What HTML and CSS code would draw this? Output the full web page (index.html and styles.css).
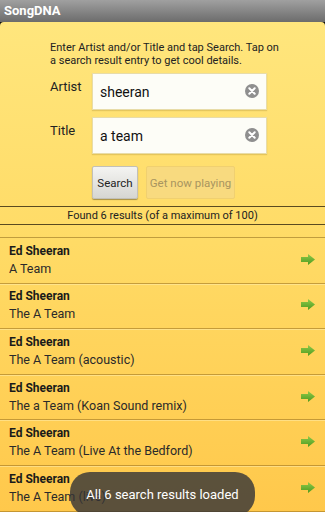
FILE: index.html
```html
<!DOCTYPE html>
<html>
<head>
<meta charset="utf-8">
<link rel="stylesheet" href="styles.css">
</head>
<body>
<div class="app">
  <div class="titlebar">SongDNA</div>
  <div class="panel">
    <div class="form">
      <p class="intro">Enter Artist and/or Title and tap Search. Tap on a search result entry to get cool details.</p>
      <div class="field">
        <span class="label">Artist</span>
        <div class="input"><span class="value">sheeran</span><span class="clear"><svg viewBox="0 0 14 14" width="14" height="14"><circle cx="7" cy="7" r="7" fill="#8f8f8f"/><path d="M4.3 4.3 9.7 9.7M9.7 4.3 4.3 9.7" stroke="#fff" stroke-width="2" stroke-linecap="round"/></svg></span></div>
      </div>
      <div class="field">
        <span class="label">Title</span>
        <div class="input"><span class="value">a team</span><span class="clear"><svg viewBox="0 0 14 14" width="14" height="14"><circle cx="7" cy="7" r="7" fill="#8f8f8f"/><path d="M4.3 4.3 9.7 9.7M9.7 4.3 4.3 9.7" stroke="#fff" stroke-width="2" stroke-linecap="round"/></svg></span></div>
      </div>
      <div class="buttons">
        <button class="btn btn-search">Search</button>
        <button class="btn btn-disabled">Get now playing</button>
      </div>
    </div>
    <div class="status">Found 6 results (of a maximum of 100)</div>
    <ul class="results">
      <li class="row"><div class="txt"><b>Ed Sheeran</b><span>A Team</span></div><svg class="arrow" viewBox="0 0 14 11" width="14" height="11"><defs><linearGradient id="g" x1="0" y1="0" x2="0" y2="1"><stop offset="0" stop-color="#8fcb4a"/><stop offset="1" stop-color="#4e9a1e"/></linearGradient></defs><path d="M0 3H7V0L14 5.5 7 11V8H0Z" fill="url(#g)"/></svg></li>
      <li class="row"><div class="txt"><b>Ed Sheeran</b><span>The A Team</span></div><svg class="arrow" viewBox="0 0 14 11" width="14" height="11"><path d="M0 3H7V0L14 5.5 7 11V8H0Z" fill="url(#g)"/></svg></li>
      <li class="row"><div class="txt"><b>Ed Sheeran</b><span>The A Team (acoustic)</span></div><svg class="arrow" viewBox="0 0 14 11" width="14" height="11"><path d="M0 3H7V0L14 5.5 7 11V8H0Z" fill="url(#g)"/></svg></li>
      <li class="row"><div class="txt"><b>Ed Sheeran</b><span>The a Team (Koan Sound remix)</span></div><svg class="arrow" viewBox="0 0 14 11" width="14" height="11"><path d="M0 3H7V0L14 5.5 7 11V8H0Z" fill="url(#g)"/></svg></li>
      <li class="row"><div class="txt"><b>Ed Sheeran</b><span>The A Team (Live At the Bedford)</span></div><svg class="arrow" viewBox="0 0 14 11" width="14" height="11"><path d="M0 3H7V0L14 5.5 7 11V8H0Z" fill="url(#g)"/></svg></li>
      <li class="row"><div class="txt"><b>Ed Sheeran</b><span>The A Team (live)</span></div><svg class="arrow" viewBox="0 0 14 11" width="14" height="11"><path d="M0 3H7V0L14 5.5 7 11V8H0Z" fill="url(#g)"/></svg></li>
    </ul>
    <div class="toast">All 6 search results loaded</div>
  </div>
</div>
</body>
</html>
```
FILE: styles.css
```css
* { box-sizing: border-box; }
html, body { margin: 0; padding: 0; }
body {
  width: 325px; height: 512px; overflow: hidden;
  background: #111;
  font-family: Roboto, "Noto Sans", sans-serif;
}
.app { width: 325px; height: 512px; display: flex; flex-direction: column; }
.titlebar {
  height: 22px; flex: none;
  background: linear-gradient(#a0a0a0, #6c6c6c);
  color: #fff; font-weight: bold; font-size: 13px;
  line-height: 22px; padding-left: 4px;
}
.panel {
  position: relative;
  flex: 1;
  border-radius: 4px 4px 0 0;
  background: linear-gradient(#ffe67d 0%, #ffdb66 45%, #ffc84b 100%);
  overflow: hidden;
}
.form { padding: 19px 0 0 50px; }
.intro {
  margin: 0; width: 230px;
  font-size: 11px; line-height: 13px; color: #222;
}
.field { display: flex; margin-top: 6px; }
.field + .field { margin-top: 7px; }
.field .label {
  width: 42px; font-size: 13px; color: #222; padding-top: 6px;
}
.input {
  width: 175px; height: 37px;
  background: #fdfdf7;
  border: 1px solid #e8dca8;
  box-shadow: 0 1px 1px rgba(150,120,30,0.25);
  display: flex; align-items: center; justify-content: space-between;
  padding: 0 7px 0 7px;
}
.value { font-size: 14px; color: #111; }
.clear { display: flex; margin-top: -2px; }
.buttons { display: flex; gap: 8px; margin: 12px 0 0 42px; }
.btn {
  height: 33px; padding: 0; font-family: inherit; font-size: 11.5px;
  border-radius: 2px;
}
.btn-search {
  width: 46px; color: #222;
  background: linear-gradient(#f4f4f2, #d6d6d2);
  border: 1px solid #c2c0b8;
  box-shadow: 0 1px 1px rgba(0,0,0,0.35);
}
.btn-disabled {
  width: 89px; color: #a89560;
  background: #f8da7f;
  border: 1px solid #f0d070;
}
.status {
  margin-top: 7px;
  border-top: 1px solid #5a4a20;
  border-bottom: 1px solid #5a4a20;
  height: 19px; line-height: 17px;
  text-align: center; font-size: 11px; color: #222;
}
.results {
  list-style: none; margin: 12px 0 0; padding: 0;
  border-top: 1px solid rgba(140,105,30,0.55);
}
.row {
  height: 45.6px;
  border-bottom: 1px solid rgba(150,110,30,0.55);
  box-shadow: 0 1px 0 rgba(255,240,180,0.5);
  display: flex; align-items: center; justify-content: space-between;
  padding: 0 10px 0 9px;
}
.txt { display: flex; flex-direction: column; color: #1a1a1a; }
.txt b { font-size: 12px; line-height: 17px; }
.txt span { font-size: 12.5px; line-height: 18px; color: #2a2a2a; }
.arrow { margin-top: -2px; }
.toast {
  position: absolute; left: 70px; top: 450px;
  width: 185px; height: 44px;
  border-radius: 20px;
  background: rgba(50,50,55,0.8);
  color: #fff; font-size: 13px;
  display: flex; align-items: center; justify-content: center;
}
```
